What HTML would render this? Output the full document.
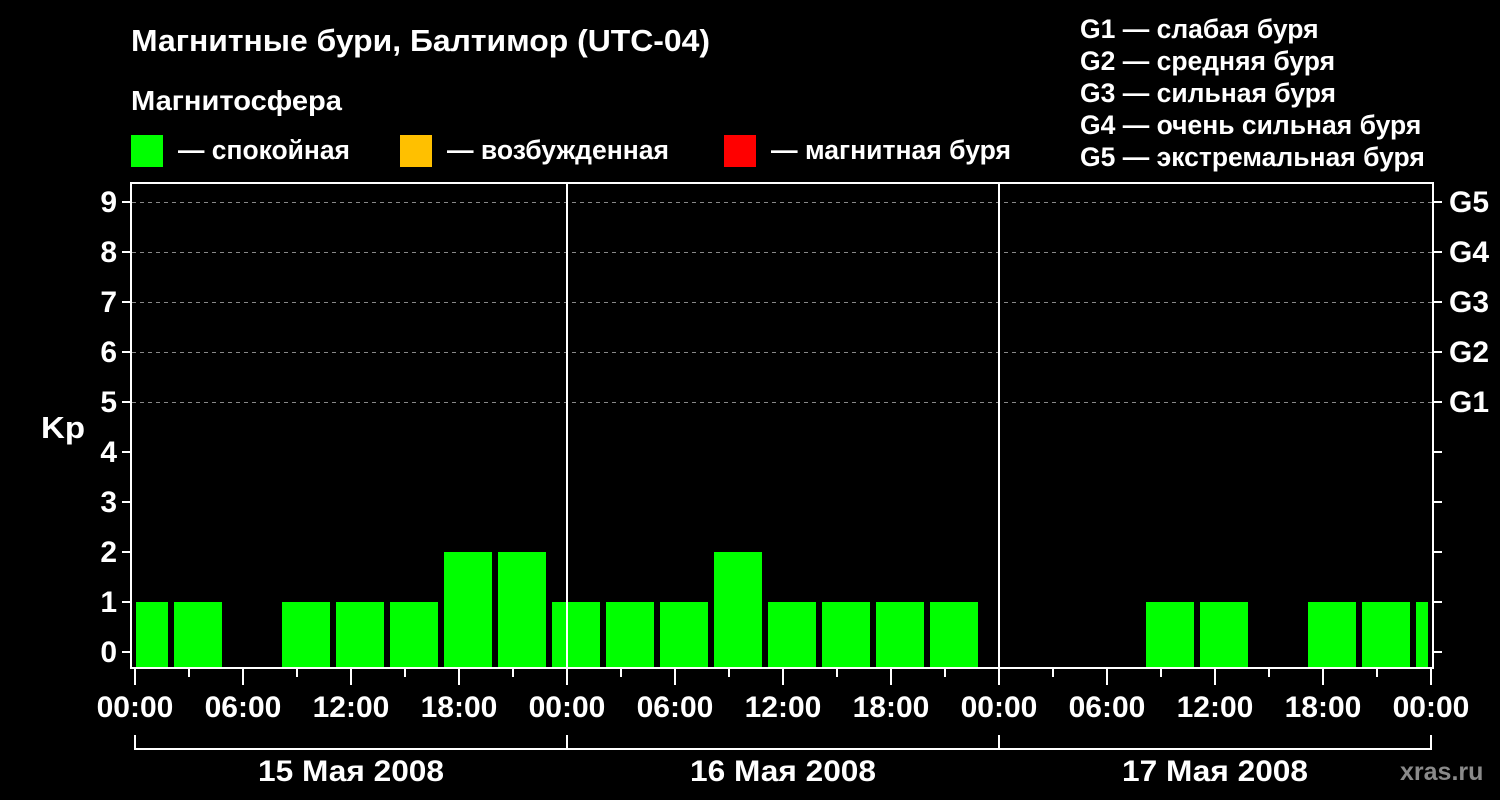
<!DOCTYPE html><html><head><meta charset="utf-8"><style>html,body{margin:0;padding:0;background:#000;width:1500px;height:800px;overflow:hidden}svg text{font-family:"Liberation Sans",sans-serif;font-weight:bold;fill:#fff}</style></head><body>
<svg width="1500" height="800" xmlns="http://www.w3.org/2000/svg">
<rect width="1500" height="800" fill="#000"/>
<text x="131" y="51" font-size="31" textLength="579" lengthAdjust="spacingAndGlyphs">Магнитные бури, Балтимор (UTC-04)</text>
<text x="131" y="110" font-size="28" textLength="211" lengthAdjust="spacingAndGlyphs">Магнитосфера</text>
<rect x="131" y="135" width="32" height="32" fill="#00ff00"/>
<text x="178" y="159" font-size="26.5" textLength="172" lengthAdjust="spacingAndGlyphs">— спокойная</text>
<rect x="400" y="135" width="32" height="32" fill="#ffc000"/>
<text x="447" y="159" font-size="26.5" textLength="222" lengthAdjust="spacingAndGlyphs">— возбужденная</text>
<rect x="724" y="135" width="32" height="32" fill="#ff0000"/>
<text x="771" y="159" font-size="26.5" textLength="240" lengthAdjust="spacingAndGlyphs">— магнитная буря</text>
<g font-size="26.5">
<text x="1080" y="38">G1 — слабая буря</text>
<text x="1080" y="70">G2 — средняя буря</text>
<text x="1080" y="102">G3 — сильная буря</text>
<text x="1080" y="134">G4 — очень сильная буря</text>
<text x="1080" y="166">G5 — экстремальная буря</text>
</g>
<g stroke="#888" stroke-dasharray="4,4" stroke-width="1">
<line x1="132" x2="1432" y1="202.5" y2="202.5"/><line x1="132" x2="1432" y1="252.5" y2="252.5"/><line x1="132" x2="1432" y1="302.5" y2="302.5"/><line x1="132" x2="1432" y1="352.5" y2="352.5"/><line x1="132" x2="1432" y1="402.5" y2="402.5"/>
</g>
<g fill="#00ff00">
<rect x="136" y="602" width="32" height="66"/>
<rect x="174" y="602" width="48" height="66"/>
<rect x="282" y="602" width="48" height="66"/>
<rect x="336" y="602" width="48" height="66"/>
<rect x="390" y="602" width="48" height="66"/>
<rect x="444" y="552" width="48" height="116"/>
<rect x="498" y="552" width="48" height="116"/>
<rect x="552" y="602" width="48" height="66"/>
<rect x="606" y="602" width="48" height="66"/>
<rect x="660" y="602" width="48" height="66"/>
<rect x="714" y="552" width="48" height="116"/>
<rect x="768" y="602" width="48" height="66"/>
<rect x="822" y="602" width="48" height="66"/>
<rect x="876" y="602" width="48" height="66"/>
<rect x="930" y="602" width="48" height="66"/>
<rect x="1146" y="602" width="48" height="66"/>
<rect x="1200" y="602" width="48" height="66"/>
<rect x="1308" y="602" width="48" height="66"/>
<rect x="1362" y="602" width="48" height="66"/>
<rect x="1416" y="602" width="12" height="66"/>
</g>
<g stroke="#fff" stroke-width="2" fill="none">
<rect x="131" y="183" width="1302" height="485"/>
<line x1="567" y1="183" x2="567" y2="668"/><line x1="999" y1="183" x2="999" y2="668"/>
<path d="M122 202H131M122 252H131M122 302H131M122 352H131M122 402H131M122 452H131M122 502H131M122 552H131M122 602H131M122 652H131"/>
<path d="M1433 202H1442M1433 252H1442M1433 302H1442M1433 352H1442M1433 402H1442M1433 452H1442M1433 502H1442M1433 552H1442M1433 602H1442M1433 652H1442"/>
<path d="M135 668V685M189 668V677M243 668V685M297 668V677M351 668V685M405 668V677M459 668V685M513 668V677M567 668V685M621 668V677M675 668V685M729 668V677M783 668V685M837 668V677M891 668V685M945 668V677M999 668V685M1053 668V677M1107 668V685M1161 668V677M1215 668V685M1269 668V677M1323 668V685M1377 668V677M1431 668V685"/>
<path d="M135 735V749H1431V735M567 735V749M999 735V749"/>
</g>
<g font-size="30" text-anchor="end">
<text x="117" y="212">9</text><text x="117" y="262">8</text><text x="117" y="312">7</text><text x="117" y="362">6</text><text x="117" y="412">5</text><text x="117" y="462">4</text><text x="117" y="512">3</text><text x="117" y="562">2</text><text x="117" y="612">1</text><text x="117" y="662">0</text>
</g>
<text x="41" y="438" font-size="31" textLength="44" lengthAdjust="spacingAndGlyphs">Kp</text>
<g font-size="30">
<text x="1449" y="212">G5</text><text x="1449" y="262">G4</text><text x="1449" y="312">G3</text><text x="1449" y="362">G2</text><text x="1449" y="412">G1</text>
</g>
<g font-size="30" text-anchor="middle">
<text x="135" y="717">00:00</text><text x="243" y="717">06:00</text><text x="351" y="717">12:00</text><text x="459" y="717">18:00</text><text x="567" y="717">00:00</text><text x="675" y="717">06:00</text><text x="783" y="717">12:00</text><text x="891" y="717">18:00</text><text x="999" y="717">00:00</text><text x="1107" y="717">06:00</text><text x="1215" y="717">12:00</text><text x="1323" y="717">18:00</text><text x="1431" y="717">00:00</text>
</g>
<g font-size="30" text-anchor="middle">
<text x="351" y="781" textLength="186" lengthAdjust="spacingAndGlyphs">15 Мая 2008</text><text x="783" y="781" textLength="186" lengthAdjust="spacingAndGlyphs">16 Мая 2008</text><text x="1215" y="781" textLength="186" lengthAdjust="spacingAndGlyphs">17 Мая 2008</text>
</g>
<text x="1400" y="780" font-size="25" style="fill:#8a8a8a">xras.ru</text>
</svg>
</body></html>
